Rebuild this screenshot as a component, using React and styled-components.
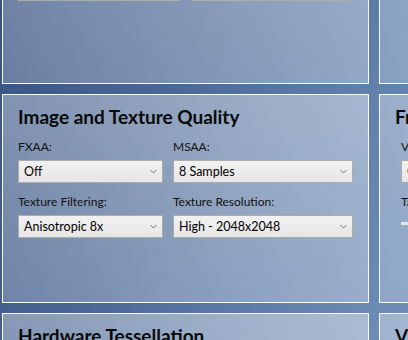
import React from "react";
import styled, { createGlobalStyle } from "styled-components";

const Global = createGlobalStyle`
  html, body { margin: 0; padding: 0; }
  body {
    width: 408px;
    height: 340px;
    overflow: hidden;
    font-family: Lato, "Open Sans", sans-serif;
    background: linear-gradient(112deg, #385383 0%, #4b6894 38%, #5e7da9 70%, #6f8eb8 100%);
  }
`;

const Grid = styled.div`
  display: grid;
  grid-template-columns: 367px 367px;
  grid-auto-rows: 209px;
  gap: 10px;
  margin-top: -125px;
  padding-left: 2px;
`;

const Panel = styled.section`
  box-sizing: border-box;
  border: 1px solid rgba(255, 255, 255, 0.95);
  background:
    linear-gradient(
      120deg,
      rgba(255, 255, 255, 0) 0%,
      rgba(255, 255, 255, 0.1) 60%,
      rgba(255, 255, 255, 0.14) 100%
    ),
    linear-gradient(
      to bottom,
      rgba(255, 255, 255, 0.36) 0%,
      rgba(255, 255, 255, 0.27) 55%,
      rgba(255, 255, 255, 0.2) 100%
    );
  padding: 10px 15px 15px 15px;
  overflow: hidden;
  white-space: nowrap;
`;

const Title = styled.h2`
  margin: 0 0 10px 0;
  font-size: 19px;
  line-height: 24px;
  font-weight: 700;
  color: #0a0a0a;
`;

const Fields = styled.div`
  display: grid;
  grid-template-columns: ${(p) => p.$cols};
  column-gap: 10px;
  row-gap: ${(p) => p.$rowGap || 11}px;
  padding-left: ${(p) => p.$indent || 0}px;
`;

const Field = styled.div`
  display: flex;
  flex-direction: column;
  gap: 5px;
  min-width: 0;
`;

const Label = styled.label`
  font-size: 12px;
  line-height: 16px;
  color: #111;
`;

const Select = styled.div`
  box-sizing: border-box;
  height: 23px;
  border: 1px solid #acacac;
  background: linear-gradient(to bottom, #f2f2f2, #e6e6e6);
  display: flex;
  align-items: center;
  justify-content: space-between;
  padding: 0 5px 0 5px;
  font-size: 12.5px;
  line-height: 21px;
  color: #000;
`;

const Track = styled.div`
  height: 23px;
  display: flex;
  align-items: center;
  &::before {
    content: "";
    display: block;
    width: 100%;
    height: 3px;
    margin-top: -6px;
    background: #e4e6ea;
  }
`;

const Chevron = () => (
  <svg width="7" height="5" viewBox="0 0 7 5">
    <path d="M0.5 1 L3.5 4 L6.5 1" fill="none" stroke="#707070" strokeWidth="1" />
  </svg>
);

const Dropdown = ({ value }) => (
  <Select>
    <span>{value}</span>
    <Chevron />
  </Select>
);

export default function App() {
  return (
    <>
      <Global />
      <Grid>
        <Panel>
          <Title>Display</Title>
          <Fields $cols="1fr 1fr" $rowGap={14}>
            <Field>
              <Label>Resolution:</Label>
              <Dropdown value="1920x1080" />
            </Field>
            <Field>
              <Label>Window Mode:</Label>
              <Dropdown value="Fullscreen" />
            </Field>
            <Field>
              <Dropdown value="60 Hz" />
            </Field>
            <Field>
              <Dropdown value="Primary Monitor" />
            </Field>
          </Fields>
        </Panel>
        <Panel>
          <Title>Interface</Title>
        </Panel>
        <Panel>
          <Title>Image and Texture Quality</Title>
          <Fields $cols="145px 180px">
            <Field>
              <Label>FXAA:</Label>
              <Dropdown value="Off" />
            </Field>
            <Field>
              <Label>MSAA:</Label>
              <Dropdown value="8 Samples" />
            </Field>
            <Field>
              <Label>Texture Filtering:</Label>
              <Dropdown value="Anisotropic 8x" />
            </Field>
            <Field>
              <Label>Texture Resolution:</Label>
              <Dropdown value="High - 2048x2048" />
            </Field>
          </Fields>
        </Panel>
        <Panel>
          <Title>Frame Rate</Title>
          <Fields $cols="160px 160px" $indent={6}>
            <Field>
              <Label>VSync:</Label>
              <Dropdown value="Off" />
            </Field>
            <Field>
              <Label>Refresh:</Label>
              <Dropdown value="Auto" />
            </Field>
            <Field>
              <Label>Target FPS:</Label>
              <Track />
            </Field>
          </Fields>
        </Panel>
        <Panel>
          <Title>Hardware Tessellation</Title>
        </Panel>
        <Panel>
          <Title>Visual Effects</Title>
        </Panel>
      </Grid>
    </>
  );
}
